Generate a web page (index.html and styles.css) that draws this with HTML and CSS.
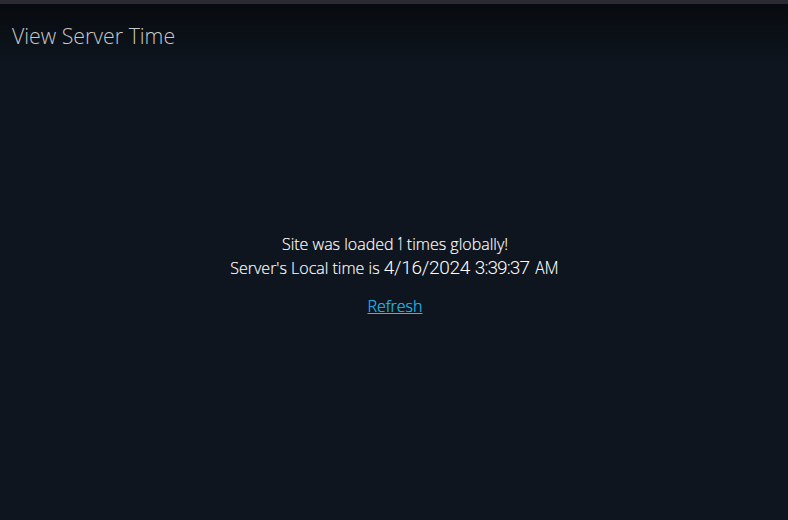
FILE: index.html
```html
<!DOCTYPE html>
<html lang="en">
<head>
<meta charset="utf-8">
<title>View Server Time</title>
<link rel="stylesheet" href="styles.css">
</head>
<body>
<header class="header"><h1 class="title">View Server Time</h1></header>
<main class="content">
<p class="line">Site was loaded <span class="count"><span class="digit">1</span></span> times globally!</p>
<p class="line">Server's Local time is <time class="clock"><span class="date">4/16/2024 </span><span class="time">3:39:37 </span><span class="period">AM</span></time></p>
<a class="refresh" href="#">Refresh</a>
</main>
</body>
</html>
```

FILE: styles.css
```css
* { box-sizing: border-box; }
body {
  margin: 0;
  height: 520px;
  display: flex;
  flex-direction: column;
  overflow: hidden;
  border-top: 4px solid #2b2a33;
  background: linear-gradient(#070a0e, #0e151e 64px);
  color: #fff;
  font: 300 16px/24px "Open Sans", sans-serif;
}
.header { height: 64px; padding: 16px 12px; }
.title { margin: 0; font-size: 21.3px; line-height: 32px; font-weight: 300; color: #c8c8c8; }
.content { display: flex; flex-direction: column; align-items: center; padding: 164px 0 0 2px; }
.line { display: flex; align-items: baseline; height: 24px; margin: 0; white-space: pre; -webkit-text-stroke: 0.15px; }
.count, .clock { font-family: Roboto, sans-serif; font-size: 19px; line-height: 22px; -webkit-text-stroke: 0; }
.count { width: 5px; display: flex; justify-content: center; }
.digit { flex: none; transform: scaleX(0.45); -webkit-text-stroke: 0.5px; }
.clock { display: flex; }
.date { width: 91px; letter-spacing: -0.3px; }
.time { width: 60px; letter-spacing: -0.9px; }
.period { width: 25px; transform: scaleX(0.83); transform-origin: left; }
.refresh { margin-top: 14px; color: #1fc0f5; -webkit-text-stroke: 0.2px; }
```
